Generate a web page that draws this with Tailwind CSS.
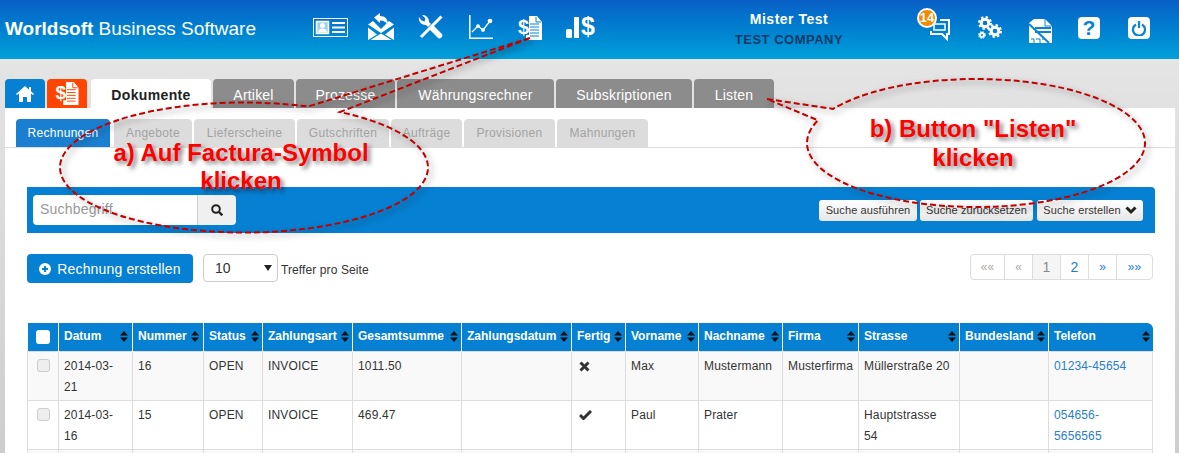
<!DOCTYPE html>
<html lang="de">
<head>
    <meta charset="UTF-8">
    <title>Worldsoft Business Software</title>
    <script src="https://cdn.jsdelivr.net/npm/@tailwindcss/browser@4"></script>
</head>
<body class="font-['Liberation_Sans',Arial,sans-serif] text-[#333]">
<div class="relative w-[1179px] h-[453px] overflow-hidden bg-linear-to-b from-[#e8e8e8] to-[#cdcdcd]">

    <!-- header -->
    <header class="flex items-start h-[59px] text-white bg-linear-to-b from-[#0a5fc6] to-[#04a0d9]">
        <div class="w-[313px] pl-[5px] pt-[19px] text-[19px] leading-[20px]"><b>Worldsoft</b> Business Software</div>
        <svg class="mt-[18px] w-[35px] h-[19px]" viewBox="0 0 35 19" fill="none" stroke="white"><rect x=".5" y=".5" width="34" height="18"/><rect x="3.500" y="3.500" width="12" height="12" fill="#9fd0f0" stroke-width="1.500"/><circle cx="9.500" cy="7.500" r="2.500" fill="white" stroke="none"/><path d="M5 14.500c0-3 2-4 4.500-4s4.500 1 4.500 4z" fill="white" stroke="none"/><path d="M19 5h13M19 9.500h13M19 14h13" stroke-width="1.800"/></svg>
        <svg class="ml-[20px] mt-[13px] w-[26px] h-[27px]" viewBox="0 0 26 27" fill="white"><path d="M0 14.500L9 21.500 0 27zM26 14.500L17 21.500 26 27zM2.500 27L13 20.500 23.500 27z"/><path d="M0 11.500L5 8l8 8 8-8 5 3.500L13 20z"/><path d="M6 4.500L12 0v3c5 0 8 3 8 9-2-3-4-4.500-8-4.500v2.500z"/></svg>
        <svg class="ml-[24px] mt-[15px] w-[25px] h-[25px]" viewBox="0 0 25 25" fill="white"><path d="M1 2a6.500 6.500 0 0 0 7 8l2 2 3-3-2-2A6.500 6.500 0 0 0 4 0l3.500 3.500-1 3-3-1z"/><path d="M14.500 13.500l7 7" stroke="white" stroke-width="5.500" stroke-linecap="round"/><path d="M23.500 1.500L3 22" stroke="white" stroke-width="3"/></svg>
        <svg class="ml-[26px] mt-[15px] w-[24px] h-[24px]" viewBox="0 0 24 24" fill="none" stroke="white" stroke-width="1.300"><path d="M.8 0v23.200H24" stroke-width="1.500"/><path d="M3 17l6-6 5 4 7-9"/><circle cx="9" cy="11" r="1.200" fill="white"/><circle cx="14" cy="15" r="1.200" fill="white"/><circle cx="21" cy="6" r="1.700" fill="white"/></svg>
        <svg class="ml-[26px] mt-[16px] w-[23px] h-[24px] overflow-visible" viewBox="0 0 23 24"><text x="-1" y="18" font-family="Liberation Sans" font-weight="700" font-size="20" fill="white">$</text><path d="M10 0h8l5 6v18H7v-5h3z" fill="white"/><path d="M17 1v5h5" fill="none" stroke="#0785d2"/><path d="M11 8h9M11 11h9M11 14h9M11 17h9M11 20h9" stroke="#0785d2"/></svg>
        <svg class="ml-[24px] mt-[17px] w-[30px] h-[21px] overflow-visible" viewBox="0 0 30 21" fill="white"><rect x="0" y="12" width="6" height="9" rx="1.500"/><rect x="8" y="0" width="5" height="21"/><text x="15" y="18" font-family="Liberation Sans" font-weight="700" font-size="25">$</text></svg>

        <div class="w-[180px] ml-[103px] pt-[12px] text-center leading-[14px]">
            <div class="font-bold text-[14px] tracking-[.5px]">Mister Test</div>
            <div class="font-bold mt-[7px] text-[13px] tracking-[.5px] text-[#0b3a66]">TEST COMPANY</div>
        </div>

        <div class="relative ml-[49px] mt-[19px] w-[22px] h-[22px]">
            <svg class="w-[22px] h-[22px]" viewBox="0 0 22 22" fill="none" stroke="white" stroke-width="2"><path d="M12 1h9v14h-2v5l-5-5H3v-3"/><path d="M6 9V5h11v6H6z" stroke-width="1.500"/></svg>
            <span class="absolute left-[-11px] top-[-11px] w-[20px] h-[20px] rounded-full bg-[#f28a00] border-2 border-white text-[13px] leading-[16px] text-center font-bold">14</span>
        </div>
        <svg class="ml-[27px] mt-[16px] w-[26px] h-[24px]" viewBox="0 0 26 24" fill="none" stroke="white"><circle cx="8" cy="7" r="3.800" stroke-width="3"/><circle cx="8" cy="7" r="6" stroke-width="2" stroke-dasharray="2.400 2.300"/><circle cx="18" cy="15" r="3.800" stroke-width="3"/><circle cx="18" cy="15" r="6" stroke-width="2" stroke-dasharray="2.400 2.300"/><circle cx="5" cy="19" r="2" stroke-width="2"/><circle cx="5" cy="19" r="3.400" stroke-width="1" stroke-dasharray="1.500 1.200"/></svg>
        <svg class="ml-[26px] mt-[19px] w-[23px] h-[24px]" viewBox="0 0 23 24" fill="white"><path d="M5 0h11l7 7v17H0V4z"/><path d="M16 0v7h7" fill="none" stroke="#0785d2"/><path d="M6 9h16M6 13h16" stroke="#0785d2" stroke-width="2"/><path d="M0 5l20 19" stroke="#0785d2" stroke-width="2"/><path d="M2 20h3v4M7 20h4v4M13 20h3" fill="none" stroke="#0785d2"/></svg>
        <div class="ml-[26px] mt-[17px] w-[22px] h-[22px] rounded-[4px] bg-white text-[#0785d2] text-[21px] leading-[22px] text-center font-bold">?</div>
        <div class="ml-[28px] mt-[17px] w-[22px] h-[22px] rounded-[4px] bg-white flex items-center justify-center">
            <svg class="w-[14px] h-[15px]" viewBox="0 0 14 15" fill="none" stroke="#0785d2" stroke-width="2.200"><path d="M4 3.500a6 6 0 1 0 6 0"/><path d="M7 0v7"/></svg>
        </div>
    </header>

    <!-- main tabs -->
    <nav class="flex items-end h-[29px] mt-[20px] pl-[5px] text-[14px] tracking-[.2px] text-white">
        <div class="w-[40px] h-[29px] mr-[2px] rounded-t-[4px] bg-[#0680d2] flex items-center justify-center">
            <svg class="w-[18px] h-[16px]" viewBox="0 0 18 16" fill="white"><path d="M9 0l9 8-1 1-2-1.500V16h-4v-5H7v5H3V7.500L1 9 0 8z"/><rect x="13" y="1" width="2" height="4"/></svg>
        </div>
        <div class="w-[40px] h-[29px] mr-[4px] rounded-t-[4px] bg-[#ff4500] flex items-center justify-center">
            <svg class="w-[23px] h-[23px] overflow-visible" viewBox="0 0 23 24"><text x="-1" y="18" font-family="Liberation Sans" font-weight="700" font-size="20" fill="white">$</text><path d="M10 0h8l5 6v18H7v-5h3z" fill="white"/><path d="M17 1v5h5" fill="none" stroke="#ff4500"/><path d="M11 8h9M11 11h9M11 14h9M11 17h9M11 20h9" stroke="#ff4500"/></svg>
        </div>
        <div class="w-[120px] h-[29px] mr-[2px] rounded-t-[4px] bg-white text-[#222] font-bold tracking-[.35px] text-center leading-[32px]">Dokumente</div>
        <div class="w-[81px] h-[29px] mr-[2px] rounded-t-[4px] bg-[#8c8c8c] text-center leading-[32px]">Artikel</div>
        <div class="w-[99px] h-[29px] mr-[2px] rounded-t-[4px] bg-[#8c8c8c] text-center leading-[32px]">Prozesse</div>
        <div class="w-[157px] h-[29px] mr-[2px] rounded-t-[4px] bg-[#8c8c8c] text-center leading-[32px]">Währungsrechner</div>
        <div class="w-[136px] h-[29px] mr-[2px] rounded-t-[4px] bg-[#8c8c8c] text-center leading-[32px]">Subskriptionen</div>
        <div class="w-[80px] h-[29px] rounded-t-[4px] bg-[#8c8c8c] text-center leading-[32px]">Listen</div>
    </nav>

    <main class="ml-[5px] w-[1170px] h-[345px] bg-white overflow-hidden">
        <!-- sub tabs -->
        <div class="flex items-end h-[40px] pl-[11px] border-b border-[#ddd] text-[12px] tracking-[.3px] text-[#a3a3a3]">
            <div class="w-[94px] h-[28px] mr-[4px] rounded-t-[4px] bg-[#1a7fd0] text-white text-center leading-[28px]">Rechnungen</div>
            <div class="w-[78px] h-[28px] mr-[2px] rounded-t-[4px] bg-[#dcdcdc] text-center leading-[28px]">Angebote</div>
            <div class="w-[101px] h-[28px] mr-[2px] rounded-t-[4px] bg-[#dcdcdc] text-center leading-[28px]">Lieferscheine</div>
            <div class="w-[92px] h-[28px] mr-[2px] rounded-t-[4px] bg-[#dcdcdc] text-center leading-[28px]">Gutschriften</div>
            <div class="w-[71px] h-[28px] mr-[2px] rounded-t-[4px] bg-[#dcdcdc] text-center leading-[28px]">Aufträge</div>
            <div class="w-[91px] h-[28px] mr-[2px] rounded-t-[4px] bg-[#dcdcdc] text-center leading-[28px]">Provisionen</div>
            <div class="w-[91px] h-[28px] rounded-t-[4px] bg-[#dcdcdc] text-center leading-[28px]">Mahnungen</div>
        </div>

        <!-- search bar -->
        <div class="flex items-center justify-between ml-[22px] mt-[39px] w-[1128px] h-[46px] pl-[6px] pr-[12px] bg-[#0680d2] rounded-tr-[4px]">
            <div class="flex h-[30px]">
                <div class="w-[164px] pl-[7px] rounded-l-[4px] bg-white text-[14px] leading-[28px] tracking-[.2px] text-[#999]">Suchbegriff</div>
                <div class="w-[39px] flex items-center justify-center rounded-r-[4px] bg-[#f0f0f0] border-l border-[#ccc]">
                    <svg class="w-[12px] h-[12px]" viewBox="0 0 12 12" fill="none" stroke="#222" stroke-width="2"><circle cx="5" cy="5" r="3.800"/><path d="M8 8l3.300 3.300" stroke-width="2.400"/></svg>
                </div>
            </div>
            <div class="flex gap-[3px] text-[11px] tracking-[.1px] text-[#333]">
                <div class="w-[98px] h-[21px] rounded-[3px] bg-linear-to-b from-white to-[#e6e6e6] text-center leading-[20px]">Suche ausführen</div>
                <div class="w-[113px] h-[21px] rounded-[3px] bg-linear-to-b from-white to-[#e6e6e6] text-center leading-[20px]">Suche zurücksetzen</div>
                <div class="flex items-center justify-center gap-[4px] w-[106px] h-[21px] ml-[1px] rounded-[3px] bg-linear-to-b from-white to-[#e6e6e6]">Suche erstellen
                    <svg class="w-[12px] h-[9px]" viewBox="0 0 12 9" fill="none" stroke="#222" stroke-width="3"><path d="M1.500 1.500L6 6l4.500-4.500"/></svg>
                </div>
            </div>
        </div>

        <!-- toolbar -->
        <div class="flex items-start ml-[22px] mt-[21px] w-[1126px] h-[29px]">
            <div class="flex items-center justify-center gap-[6px] w-[166px] h-[29px] pt-[1px] rounded-[4px] bg-[#0680d2] text-white text-[14px] tracking-[.15px]">
                <svg class="w-[12px] h-[12px]" viewBox="0 0 12 12"><circle cx="6" cy="6" r="6" fill="white"/><path d="M6 3v6M3 6h6" stroke="#0680d2" stroke-width="2"/></svg>
                Rechnung erstellen
            </div>
            <div class="flex items-center justify-between w-[75px] h-[28px] ml-[10px] pl-[11px] pr-[5px] rounded-[4px] border border-[#ccc] text-[14px]">10
                <svg class="w-[8px] h-[6px]" viewBox="0 0 8 6" fill="#222"><path d="M0 0h8L4 6z"/></svg>
            </div>
            <div class="ml-[3px] text-[12px] leading-[32px] tracking-[.1px]">Treffer pro Seite</div>
            <div class="flex ml-auto h-[26px] rounded-[4px] border border-[#ddd] text-[12px] leading-[24px] text-center text-[#1a7fd0] divide-x divide-[#ddd]">
                <div class="w-[34px] text-[#aaa]">««</div>
                <div class="w-[28px] text-[#aaa]">«</div>
                <div class="w-[28px] bg-[#f5f5f5] text-[#888] text-[14px]">1</div>
                <div class="w-[28px] text-[14px]">2</div>
                <div class="w-[28px]">»</div>
                <div class="w-[35px]">»»</div>
            </div>
        </div>

        <!-- table -->
        <table class="ml-[22px] mt-[40px] w-[1125px] table-fixed border-collapse text-[12px] leading-[21px] tracking-[.15px]">
            <colgroup>
                <col class="w-[31px]"><col class="w-[74px]"><col class="w-[71px]"><col class="w-[59px]"><col class="w-[90px]"><col class="w-[109px]"><col class="w-[110px]"><col class="w-[54px]"><col class="w-[73px]"><col class="w-[84px]"><col class="w-[76px]"><col class="w-[101px]"><col class="w-[89px]"><col class="w-[104px]">
            </colgroup>
            <thead class="bg-[#0680d2] text-white font-bold tracking-[0px]">
                <tr class="h-[28px]">
                    <th class="border-r border-white"><span class="block w-[14px] h-[14px] mx-auto rounded-[3px] bg-white"></span></th>
                    <th class="border-r border-white pl-[5px] pr-[4px]"><div class="flex items-center justify-between">Datum <svg class="w-[8px] h-[11px]" viewBox="0 0 8 11" fill="#111"><path d="M4 0l4 4.500H0zM4 11L0 6.500h8z"/></svg></div></th>
                    <th class="border-r border-white pl-[5px] pr-[4px]"><div class="flex items-center justify-between">Nummer <svg class="w-[8px] h-[11px]" viewBox="0 0 8 11" fill="#111"><path d="M4 0l4 4.500H0zM4 11L0 6.500h8z"/></svg></div></th>
                    <th class="border-r border-white pl-[5px] pr-[3px]"><div class="flex items-center justify-between">Status <svg class="w-[8px] h-[11px]" viewBox="0 0 8 11" fill="#111"><path d="M4 0l4 4.500H0zM4 11L0 6.500h8z"/></svg></div></th>
                    <th class="border-r border-white pl-[5px] pr-[3px]"><div class="flex items-center justify-between">Zahlungsart <svg class="w-[8px] h-[11px]" viewBox="0 0 8 11" fill="#111"><path d="M4 0l4 4.500H0zM4 11L0 6.500h8z"/></svg></div></th>
                    <th class="border-r border-white pl-[5px] pr-[3px]"><div class="flex items-center justify-between">Gesamtsumme <svg class="w-[8px] h-[11px]" viewBox="0 0 8 11" fill="#111"><path d="M4 0l4 4.500H0zM4 11L0 6.500h8z"/></svg></div></th>
                    <th class="border-r border-white pl-[5px] pr-[3px]"><div class="flex items-center justify-between">Zahlungsdatum <svg class="w-[8px] h-[11px]" viewBox="0 0 8 11" fill="#111"><path d="M4 0l4 4.500H0zM4 11L0 6.500h8z"/></svg></div></th>
                    <th class="border-r border-white pl-[5px] pr-[3px]"><div class="flex items-center justify-between">Fertig <svg class="w-[8px] h-[11px]" viewBox="0 0 8 11" fill="#111"><path d="M4 0l4 4.500H0zM4 11L0 6.500h8z"/></svg></div></th>
                    <th class="border-r border-white pl-[5px] pr-[3px]"><div class="flex items-center justify-between">Vorname <svg class="w-[8px] h-[11px]" viewBox="0 0 8 11" fill="#111"><path d="M4 0l4 4.500H0zM4 11L0 6.500h8z"/></svg></div></th>
                    <th class="border-r border-white pl-[5px] pr-[3px]"><div class="flex items-center justify-between">Nachname <svg class="w-[8px] h-[11px]" viewBox="0 0 8 11" fill="#111"><path d="M4 0l4 4.500H0zM4 11L0 6.500h8z"/></svg></div></th>
                    <th class="border-r border-white pl-[5px] pr-[3px]"><div class="flex items-center justify-between">Firma <svg class="w-[8px] h-[11px]" viewBox="0 0 8 11" fill="#111"><path d="M4 0l4 4.500H0zM4 11L0 6.500h8z"/></svg></div></th>
                    <th class="border-r border-white pl-[5px] pr-[3px]"><div class="flex items-center justify-between">Strasse <svg class="w-[8px] h-[11px]" viewBox="0 0 8 11" fill="#111"><path d="M4 0l4 4.500H0zM4 11L0 6.500h8z"/></svg></div></th>
                    <th class="border-r border-white pl-[5px] pr-[3px]"><div class="flex items-center justify-between">Bundesland <svg class="w-[8px] h-[11px]" viewBox="0 0 8 11" fill="#111"><path d="M4 0l4 4.500H0zM4 11L0 6.500h8z"/></svg></div></th>
                    <th class="pl-[5px] pr-[3px] rounded-tr-[6px]"><div class="flex items-center justify-between">Telefon <svg class="w-[8px] h-[11px]" viewBox="0 0 8 11" fill="#111"><path d="M4 0l4 4.500H0zM4 11L0 6.500h8z"/></svg></div></th>
                </tr>
            </thead>
            <tbody class="[&_td]:border [&_td]:border-[#ddd] [&_td]:align-top [&_td]:pt-[4px] [&_td]:pb-[2px] [&_td]:px-[5px]">
                <tr class="h-[49px] bg-[#f9f9f9]">
                    <td><span class="block w-[13px] h-[13px] mx-auto mt-[3px] rounded-[3px] border border-[#ccc] bg-[#eee]"></span></td>
                    <td>2014-03-<br>21</td><td>16</td><td>OPEN</td><td>INVOICE</td><td>1011.50</td><td></td>
                    <td><svg class="w-[11px] h-[11px] mt-[5px] ml-[2px]" viewBox="0 0 11 11" stroke="#333" stroke-width="3"><path d="M1.500 1.500l8 8M9.500 1.500l-8 8"/></svg></td>
                    <td>Max</td><td>Mustermann</td><td>Musterfirma</td><td>Müllerstraße 20</td><td></td>
                    <td><span class="text-[#2a80c8]">01234-45654</span></td>
                </tr>
                <tr class="h-[49px] bg-white">
                    <td><span class="block w-[13px] h-[13px] mx-auto mt-[3px] rounded-[3px] border border-[#ccc] bg-[#eee]"></span></td>
                    <td>2014-03-<br>16</td><td>15</td><td>OPEN</td><td>INVOICE</td><td>469.47</td><td></td>
                    <td><svg class="w-[13px] h-[10px] mt-[5px] ml-[2px]" viewBox="0 0 13 10" fill="none" stroke="#333" stroke-width="3"><path d="M1 5l3.500 3.500L12 1"/></svg></td>
                    <td>Paul</td><td>Prater</td><td></td><td>Hauptstrasse<br>54</td><td></td>
                    <td><span class="text-[#2a80c8]">054656-<br>5656565</span></td>
                </tr>
                <tr class="h-[49px] bg-[#f9f9f9]">
                    <td></td><td></td><td></td><td></td><td></td><td></td><td></td><td></td><td></td><td></td><td></td><td></td><td></td><td></td>
                </tr>
            </tbody>
        </table>
    </main>

    <!-- callouts drawn over the screenshot -->
    <svg class="absolute left-0 top-0 w-[1179px] h-[453px] pointer-events-none drop-shadow-[3px_3px_3px_rgba(0,0,0,0.45)]" viewBox="0 0 1179 453" fill="none" stroke="#c00000" stroke-width="2" stroke-dasharray="6 3">
        <path d="M530 38L308 106.560A184 65 0 1 0 340 112.050Z"/>
        <path d="M767 99L833 108.900A169 64 0 1 1 818 120.300Z"/>
    </svg>
    <div class="absolute left-[60px] top-[139px] w-[362px] text-center text-[24px] leading-[28px] font-bold text-[#ff0000] [text-shadow:3px_3px_4px_rgba(0,0,0,0.5)]">a) Auf Factura-Symbol<br>klicken</div>
    <div class="absolute left-[793px] top-[114px] w-[360px] text-center text-[24px] leading-[29px] font-bold text-[#ff0000] [text-shadow:3px_3px_4px_rgba(0,0,0,0.5)]">b) Button "Listen"<br>klicken</div>
</div>
</body>
</html>
